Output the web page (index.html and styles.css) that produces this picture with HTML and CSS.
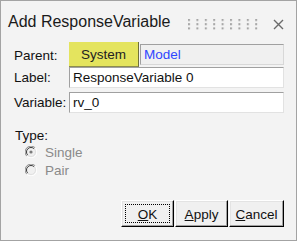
FILE: index.html
```html
<!DOCTYPE html>
<html>
<head>
<meta charset="utf-8">
<link rel="stylesheet" href="styles.css">
</head>
<body>
<div class="win">
  <div class="titlebar">
    <span class="title">Add ResponseVariable</span>
    <svg class="grip" width="72" height="12" viewBox="0 0 72 12">
      <defs>
        <pattern id="dots" x="0" y="0" width="8.4" height="4.2" patternUnits="userSpaceOnUse">
          <rect x="0" y="0" width="2" height="2" fill="#a6a6a6"/>
        </pattern>
      </defs>
      <rect x="0" y="0" width="72" height="11" fill="url(#dots)"/>
    </svg>
    <svg class="close" width="11" height="11" viewBox="0 0 11 11">
      <path d="M1 1 L10 10 M10 1 L1 10" stroke="#6a6a6a" stroke-width="1.4" fill="none"/>
    </svg>
  </div>
  <div class="form">
    <div class="row row-parent">
      <span class="lbl">Parent:</span>
      <div class="parent-fields">
        <span class="sysbtn">System</span>
        <span class="model">Model</span>
      </div>
    </div>
    <div class="row row-label">
      <span class="lbl">Label:</span>
      <span class="field">ResponseVariable 0</span>
    </div>
    <div class="row row-var">
      <span class="lbl">Variable:</span>
      <span class="field">rv_0</span>
    </div>
  </div>
  <div class="type">
    <div class="type-lbl">Type:</div>
    <div class="radio">
      <svg width="12" height="12" viewBox="0 0 12 12">
        <circle cx="6" cy="6" r="5.5" fill="#f0f0f0"/>
        <path d="M1.8 10.2 A5.5 5.5 0 0 1 10.2 1.8" stroke="#8a8a8a" stroke-width="1" fill="none"/>
        <path d="M2.8 9.2 A4.3 4.3 0 0 1 9.2 2.8" stroke="#3a3a3a" stroke-width="1" fill="none"/>
        <path d="M10.2 1.8 A5.5 5.5 0 0 1 1.8 10.2" stroke="#ffffff" stroke-width="1" fill="none"/>
        <path d="M9.2 2.8 A4.3 4.3 0 0 1 2.8 9.2" stroke="#e0e0e0" stroke-width="1" fill="none"/>
        <circle cx="6" cy="6" r="1.6" fill="#7a7a7a"/>
      </svg>
      <span class="rtext">Single</span>
    </div>
    <div class="radio">
      <svg width="12" height="12" viewBox="0 0 12 12">
        <circle cx="6" cy="6" r="5.5" fill="#f0f0f0"/>
        <path d="M1.8 10.2 A5.5 5.5 0 0 1 10.2 1.8" stroke="#8a8a8a" stroke-width="1" fill="none"/>
        <path d="M2.8 9.2 A4.3 4.3 0 0 1 9.2 2.8" stroke="#3a3a3a" stroke-width="1" fill="none"/>
        <path d="M10.2 1.8 A5.5 5.5 0 0 1 1.8 10.2" stroke="#ffffff" stroke-width="1" fill="none"/>
        <path d="M9.2 2.8 A4.3 4.3 0 0 1 2.8 9.2" stroke="#e0e0e0" stroke-width="1" fill="none"/>
      </svg>
      <span class="rtext">Pair</span>
    </div>
  </div>
  <div class="buttons">
    <button class="btn btn-ok"><span class="focus"><u>O</u>K</span></button>
    <button class="btn btn-apply"><span class="focus-none"><u>A</u>pply</span></button>
    <button class="btn btn-cancel"><span class="focus-none"><u>C</u>ancel</span></button>
  </div>
</div>
</body>
</html>
```
FILE: styles.css
```css
html, body {
  margin: 0;
  padding: 0;
  background: #ffffff;
}
.win {
  width: 297px;
  height: 241px;
  box-sizing: border-box;
  border: 1px solid #a3a3a3;
  background: #f3f3f3;
  display: flex;
  flex-direction: column;
  font-family: "Liberation Sans", Arial, sans-serif;
  color: #111;
}
.titlebar {
  height: 40px;
  box-sizing: border-box;
  display: flex;
  align-items: flex-start;
  padding: 12px 0 0 7px;
}
.title {
  font-size: 16px;
  line-height: 18px;
  color: #1a1a1a;
}
.grip {
  margin: 6px 0 0 18px;
}
.close {
  margin: 6px 0 0 13px;
}
.form {
  padding: 0 12px 0 13px;
  font-size: 13.5px;
}
.row {
  display: grid;
  grid-template-columns: 55px 1fr;
  align-items: center;
}
.lbl {
  line-height: 15px;
}
.row-parent {
  height: 26px;
}
.row-parent .lbl {
  padding-top: 2px;
}
.parent-fields {
  display: flex;
  align-items: center;
  height: 26px;
}
.sysbtn {
  width: 70px;
  height: 25px;
  box-sizing: border-box;
  background: #e4e45e;
  border-right: 1px solid #6f6f3a;
  border-bottom: 1px solid #8d8d4d;
  display: flex;
  align-items: center;
  justify-content: center;
  padding-top: 2px;
  color: #222;
}
.model {
  flex: 1;
  height: 21px;
  box-sizing: border-box;
  margin-left: 1px;
  margin-top: 1px;
  border: 1px solid #a0a0a0;
  border-right-color: #d8d8d8;
  border-bottom-color: #d8d8d8;
  background: #f0f0f0;
  color: #2f46ff;
  padding: 2px 0 0 3px;
  line-height: 15px;
}
.field {
  display: block;
  height: 21px;
  box-sizing: border-box;
  border: 1px solid #a0a0a0;
  border-right-color: #e2e2e2;
  border-bottom-color: #e2e2e2;
  background: #ffffff;
  padding: 2px 0 0 3px;
  line-height: 16px;
  color: #111;
}
.row-var {
  margin-top: 4px;
}
.type {
  padding: 15px 0 0 14px;
  font-size: 13.5px;
}
.type-lbl {
  line-height: 15px;
}
.radio {
  display: flex;
  align-items: center;
  height: 18px;
  padding-left: 10px;
}
.radio svg {
  flex: none;
}
.rtext {
  margin-left: 8px;
  color: #8a8a8a;
  line-height: 15px;
}
.buttons {
  display: flex;
  justify-content: flex-end;
  gap: 1px;
  padding: 0 12px 0 0;
  margin-top: auto;
  margin-bottom: 13px;
}
.btn {
  height: 27px;
  box-sizing: border-box;
  margin: 0;
  padding: 0;
  background: #f0f0f0;
  border-top: 1px solid #ffffff;
  border-left: 1px solid #ffffff;
  border-right: 1px solid #000000;
  border-bottom: 1px solid #000000;
  box-shadow: inset -1px -1px 0 #a0a0a0, inset 1px 1px 0 #e3e3e3;
  font-family: "Liberation Sans", Arial, sans-serif;
  font-size: 13.5px;
  color: #111;
  display: flex;
  align-items: center;
  justify-content: center;
}
.btn-ok { width: 53px; }
.btn-apply { width: 53px; }
.btn-cancel { width: 55px; }
.focus {
  display: flex;
  align-items: center;
  justify-content: center;
  width: 45px;
  height: 19px;
  box-sizing: border-box;
  border: 1px dotted #000;
  padding-top: 1px;
}
.focus-none {
  padding-top: 1px;
}
```
